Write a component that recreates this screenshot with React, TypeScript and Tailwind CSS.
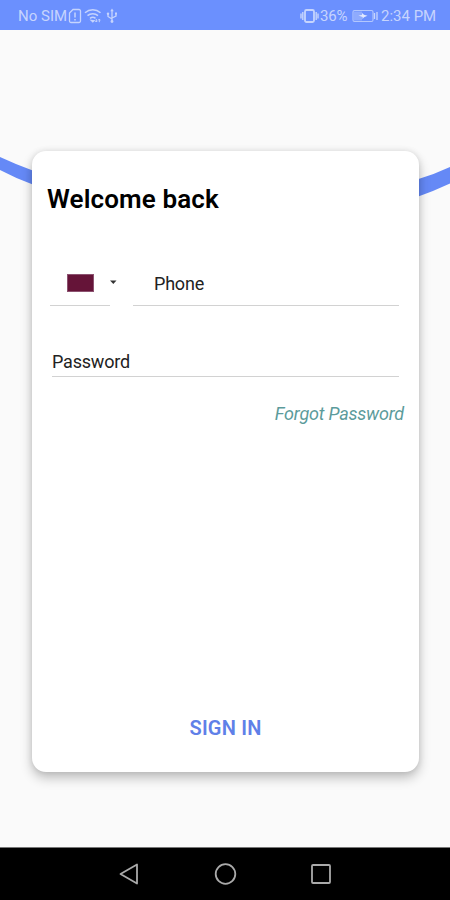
import type { ReactNode } from 'react'

function StatusBar() {
  return (
    <header className="flex h-[30px] items-center justify-between bg-[#6b90fe] pl-[18px] pr-[13px] pt-[2px] text-[15px] leading-none text-[#c6d4fd]">
      <div className="flex items-center">
        <span className="w-[50px] whitespace-nowrap">No SIM</span>
        <svg width="14" height="16" viewBox="0 0 14 16" fill="none" stroke="currentColor" strokeWidth="1.3">
          <path d="M5 1.500h6a1.500 1.500 0 0 1 1.500 1.500v10a1.500 1.500 0 0 1-1.500 1.500H3A1.500 1.500 0 0 1 1.500 13V5z" />
          <path d="M7 4.500v5M7 11v1.500" strokeWidth="1.5" />
        </svg>
        <svg className="ml-[2px]" width="18" height="16" viewBox="0 0 18 16" fill="none" stroke="currentColor" strokeWidth="1.5">
          <path d="M1 4.800C5.500 0.800 12 0.800 16.500 4.800M3.500 7.600c3-2.600 7.500-2.600 10.500 0M6 10.300c1.800-1.400 3.800-1.400 5.500 0" />
          <path d="M7.500 12.500l1.300 1.300 1-1z" fill="currentColor" />
          <path d="M12.300 11v3M11.200 12.800l1.100 1.200 1.100-1.200M15.300 14.200v-3M14.200 12.300l1.100-1.200 1.100 1.200" strokeWidth="1" />
        </svg>
        <svg className="ml-[4px]" width="12" height="16" viewBox="0 0 12 16" fill="none" stroke="currentColor" strokeWidth="1.3">
          <path d="M6 2v11M2 6v2.500L6 11M10 5.500V8L6 10" />
          <path d="M6 0.500L4.300 3.200h3.400z" fill="currentColor" stroke="none" />
          <circle cx="6" cy="13.5" r="1.4" fill="currentColor" stroke="none" />
          <circle cx="2" cy="5.8" r="1.2" fill="currentColor" stroke="none" />
          <path d="M9 4.500h2v2H9z" fill="currentColor" stroke="none" />
        </svg>
      </div>
      <div className="flex items-center">
        <svg width="20" height="16" viewBox="0 0 20 16" fill="none" stroke="currentColor" strokeWidth="1.4">
          <rect x="5" y="2" width="9" height="12" rx="1.5" strokeWidth="1.8" />
          <path d="M2.800 4v8M16.200 4v8M1 5.500v5M18 5.500v5" />
        </svg>
        <span className="w-[32px] whitespace-nowrap tracking-[-0.2px]">36%</span>
        <svg width="27" height="14" viewBox="0 0 27 14" fill="none" stroke="currentColor">
          <rect x="1" y="1.5" width="20" height="11" rx="1.5" strokeWidth="1.1" strokeOpacity="0.8" />
          <rect x="2" y="2.5" width="8" height="9" fill="currentColor" fillOpacity="0.4" stroke="none" />
          <path d="M6.500 6.500L10 6V4l2 1.800 3.500 1L12 8.200 10.500 10V8z" fill="#e2e9fe" stroke="none" />
          <path d="M22.500 4v6M25 3v8" strokeWidth="1.3" />
        </svg>
        <span className="ml-[2px] w-[56px] whitespace-nowrap">2:34 PM</span>
      </div>
    </header>
  )
}

function Field({ className, children }: { className: string; children?: ReactNode }) {
  return <div className={`flex border-b border-[#d2d2d2] ${className}`}>{children}</div>
}

function LoginCard() {
  return (
    <section className="relative ml-[32px] flex h-[621px] w-[387px] flex-col rounded-[14px] bg-white shadow-[0_6px_12px_rgba(0,0,0,0.24),0_0_6px_rgba(0,0,0,0.1)]">
      <h1 className="ml-[15px] mt-[32px] whitespace-nowrap text-[26px] font-semibold leading-8 tracking-[0.12px] text-black">
        Welcome back
      </h1>

      <div className="ml-[18px] mt-[52px] flex h-[39px] text-[18px] text-[#222]">
        <div className="flex w-[83px]">
          <Field className="w-[60px]">
            <div className="ml-[17px] mt-[7px] h-[18px] w-[27px] border border-[#8c5270] bg-[#651438]" />
          </Field>
          <svg className="mt-[13px]" width="7" height="5" viewBox="0 0 7 5">
            <path d="M0 0.500h6.500L3.300 4z" fill="#333" />
          </svg>
        </div>
        <Field className="w-[266px] pl-[21px]">
          <span className="mt-[5px] leading-6 tracking-[-0.2px]">Phone</span>
        </Field>
      </div>

      <Field className="ml-[20px] mt-[44px] h-[27px] w-[347px] text-[18px] text-[#222]">
        <span className="leading-6 tracking-[-0.2px]">Password</span>
      </Field>

      <a className="mr-[15px] mt-[25px] self-end whitespace-nowrap text-[18px] italic leading-6 tracking-[-0.2px] text-[#5c9b9b]">
        Forgot Password
      </a>

      <button className="mb-[32px] mt-auto self-center text-[20px] font-semibold leading-6 tracking-[0.2px] text-[#5f80e8]">
        SIGN IN
      </button>
    </section>
  )
}

function NavBar() {
  return (
    <nav className="flex h-[53px] items-center justify-center gap-[72px] border-t border-[#777] bg-black text-[#aaa]">
      <svg width="24" height="24" viewBox="0 0 24 24" fill="none" stroke="currentColor" strokeWidth="1.8" strokeLinejoin="round">
        <path d="M20 2.500v19L3.500 12z" />
      </svg>
      <svg width="24" height="24" viewBox="0 0 24 24" fill="none" stroke="currentColor" strokeWidth="1.8">
        <circle cx="12.5" cy="12" r="9.8" />
      </svg>
      <svg width="24" height="24" viewBox="0 0 24 24" fill="none" stroke="currentColor" strokeWidth="1.8">
        <rect x="3" y="3" width="18" height="18" rx="1" />
      </svg>
    </nav>
  )
}

export default function App() {
  return (
    <div className="flex h-[900px] w-[450px] flex-col overflow-hidden bg-[#fafafa] font-['Roboto',sans-serif]">
      <StatusBar />
      <main className="relative flex-1 pt-[121px]">
        {/* Arc passing behind the card */}
        <svg className="absolute left-0 top-0" width="450" height="240" viewBox="0 0 450 240" fill="#6589f6">
          <path d="M0 127Q16 134.500 34 141V155Q16 148.500 0 140z" />
          <path d="M417 149.500Q434 144.500 450 137V153.500Q434 161 417 167z" />
        </svg>
        <LoginCard />
      </main>
      <NavBar />
    </div>
  )
}
